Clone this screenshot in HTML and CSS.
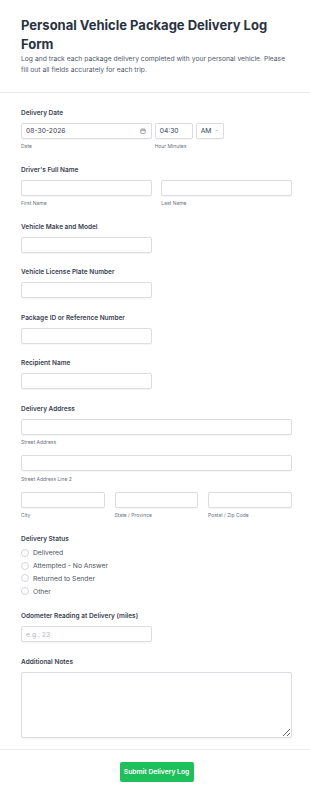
FILE: index.html
```html
<!DOCTYPE html>
<html lang="en">
<head>
<meta charset="utf-8">
<title>Personal Vehicle Package Delivery Log Form</title>
<link rel="stylesheet" href="styles.css">
</head>
<body>
<header class="header">
  <h1 class="title">Personal Vehicle Package Delivery Log Form</h1>
  <p class="desc">Log and track each package delivery completed with your personal vehicle. Please fill out all fields accurately for each trip.</p>
</header>
<form class="form">
  <div class="field">
    <div class="label">Delivery Date</div>
    <div class="date-row">
      <div class="col date-col">
        <div class="input date-input"><span class="val">08-30-2026</span>
          <svg class="cal" width="6" height="6" viewBox="0 0 12 12" fill="none" stroke="#6b7280" stroke-width="1.2"><rect x="1.5" y="2.5" width="9" height="8.5" rx="1.5"/><path d="M4 1v3M8 1v3M1.5 5.5h9"/></svg>
        </div>
        <div class="sub">Date</div>
      </div>
      <div class="col">
        <div class="time-row">
          <div class="input time"><span class="val">04:30</span></div>
          <div class="input select"><span class="val">AM</span>
            <svg class="chev" width="5" height="5" viewBox="0 0 10 10" fill="none" stroke="#6b7280" stroke-width="1.3"><path d="M2 3.5l3 3 3-3"/></svg>
          </div>
        </div>
        <div class="sub">Hour Minutes</div>
      </div>
    </div>
  </div>

  <div class="field">
    <div class="label">Driver's Full Name</div>
    <div class="grid2">
      <div class="col"><div class="input"></div><div class="sub">First Name</div></div>
      <div class="col"><div class="input"></div><div class="sub">Last Name</div></div>
    </div>
  </div>

  <div class="field">
    <div class="label">Vehicle Make and Model</div>
    <div class="grid2"><div class="input"></div></div>
  </div>

  <div class="field">
    <div class="label">Vehicle License Plate Number</div>
    <div class="grid2"><div class="input"></div></div>
  </div>

  <div class="field">
    <div class="label">Package ID or Reference Number</div>
    <div class="grid2"><div class="input"></div></div>
  </div>

  <div class="field">
    <div class="label">Recipient Name</div>
    <div class="grid2"><div class="input"></div></div>
  </div>

  <div class="field">
    <div class="label">Delivery Address</div>
    <div class="input"></div>
    <div class="sub sub-gap">Street Address</div>
    <div class="input"></div>
    <div class="sub sub-gap">Street Address Line 2</div>
    <div class="grid3">
      <div class="col"><div class="input"></div><div class="sub">City</div></div>
      <div class="col"><div class="input"></div><div class="sub">State / Province</div></div>
      <div class="col"><div class="input"></div><div class="sub">Postal / Zip Code</div></div>
    </div>
  </div>

  <div class="field field-radio">
    <div class="label">Delivery Status</div>
    <div class="radios">
      <div class="radio"><span class="circle"></span><span>Delivered</span></div>
      <div class="radio"><span class="circle"></span><span>Attempted - No Answer</span></div>
      <div class="radio"><span class="circle"></span><span>Returned to Sender</span></div>
      <div class="radio"><span class="circle"></span><span>Other</span></div>
    </div>
  </div>

  <div class="field">
    <div class="label">Odometer Reading at Delivery (miles)</div>
    <div class="grid2"><div class="input"><span class="ph">e.g., 23</span></div></div>
  </div>

  <div class="field field-last">
    <div class="label">Additional Notes</div>
    <textarea class="textarea"></textarea>
  </div>
</form>
<footer class="footer">
  <button class="submit" type="button">Submit Delivery Log</button>
</footer>
</body>
</html>
```
FILE: styles.css
```css
* { box-sizing: border-box; }
html, body { margin: 0; padding: 0; background: #ffffff; }
body { font-family: Inter, "Noto Sans", sans-serif; color: #374151; }

.header {
  padding: 16px 18px 16.5px 21px;
  border-bottom: 1px solid #e5e7eb;
}
.title {
  margin: 0;
  font-size: 13px;
  line-height: 18.7px;
  font-weight: 700;
  color: #2a3242;
}
.desc {
  margin: 0;
  font-size: 6.75px;
  line-height: 11px;
  color: #4f5b6e;
}

.form {
  padding: 15px 18px 11px 21px;
  border-bottom: 1px solid #eceef1;
}
.field { margin-bottom: 14.5px; }
.field-last { margin-bottom: 0; }
.label {
  font-size: 6.5px;
  line-height: 10px;
  font-weight: 600;
  color: #3a4250;
  margin-bottom: 5px;
}
.grid2 { display: grid; grid-template-columns: 1fr 1fr; column-gap: 9.7px; }
.grid3 { display: grid; grid-template-columns: 1fr 1fr 1fr; column-gap: 9.6px; }
.col { display: flex; flex-direction: column; }
.date-row { display: flex; gap: 3px; }
.date-col { flex: 0 0 calc(50% - 4.85px); }

.input {
  height: 16px;
  border: 1px solid #dadde2;
  border-radius: 2px;
  background: #fff;
  display: flex;
  align-items: center;
  padding: 0 4px;
  font-size: 6.75px;
  color: #374151;
  box-shadow: 0 0.5px 1px rgba(0,0,0,0.04);
}
.val { flex: 1; }
.ph { color: #b3b8c2; }
.cal { flex: none; margin-right: 1px; }
.time-row { display: flex; gap: 3px; }
.time { width: 38px; }
.select { width: 28px; padding-right: 4px; }
.select .val { flex: none; margin-right: 4px; }

.sub {
  margin-top: 3.5px;
  font-size: 5px;
  line-height: 8px;
  color: #6b7280;
}
.sub-gap { margin-bottom: 9px; }

.field-radio { margin-bottom: 13.6px; }
.field-radio .label { margin-bottom: 2.6px; }
.radio {
  height: 12.75px;
  display: flex;
  align-items: center;
  gap: 4px;
  font-size: 6.75px;
  color: #4b5563;
}
.circle {
  width: 8px; height: 8px;
  border: 1px solid #d1d5db;
  border-radius: 50%;
  flex: none;
}

.textarea {
  display: block;
  width: 100%;
  height: 66px;
  border: 1px solid #dadde2;
  border-radius: 2px;
  margin: 0;
  padding: 4px;
  font-family: inherit;
  font-size: 7px;
  box-shadow: 0 0.5px 1px rgba(0,0,0,0.04);
}

.footer {
  display: flex;
  justify-content: center;
  padding: 12.7px 18px 0 21px;
}
.submit {
  width: 74px;
  height: 19.3px;
  background: #1fbf5c;
  color: #fff;
  border: 0;
  border-radius: 2px;
  font-family: inherit;
  font-size: 6.75px;
  font-weight: 600;
  padding: 0;
  cursor: pointer;
}
```
